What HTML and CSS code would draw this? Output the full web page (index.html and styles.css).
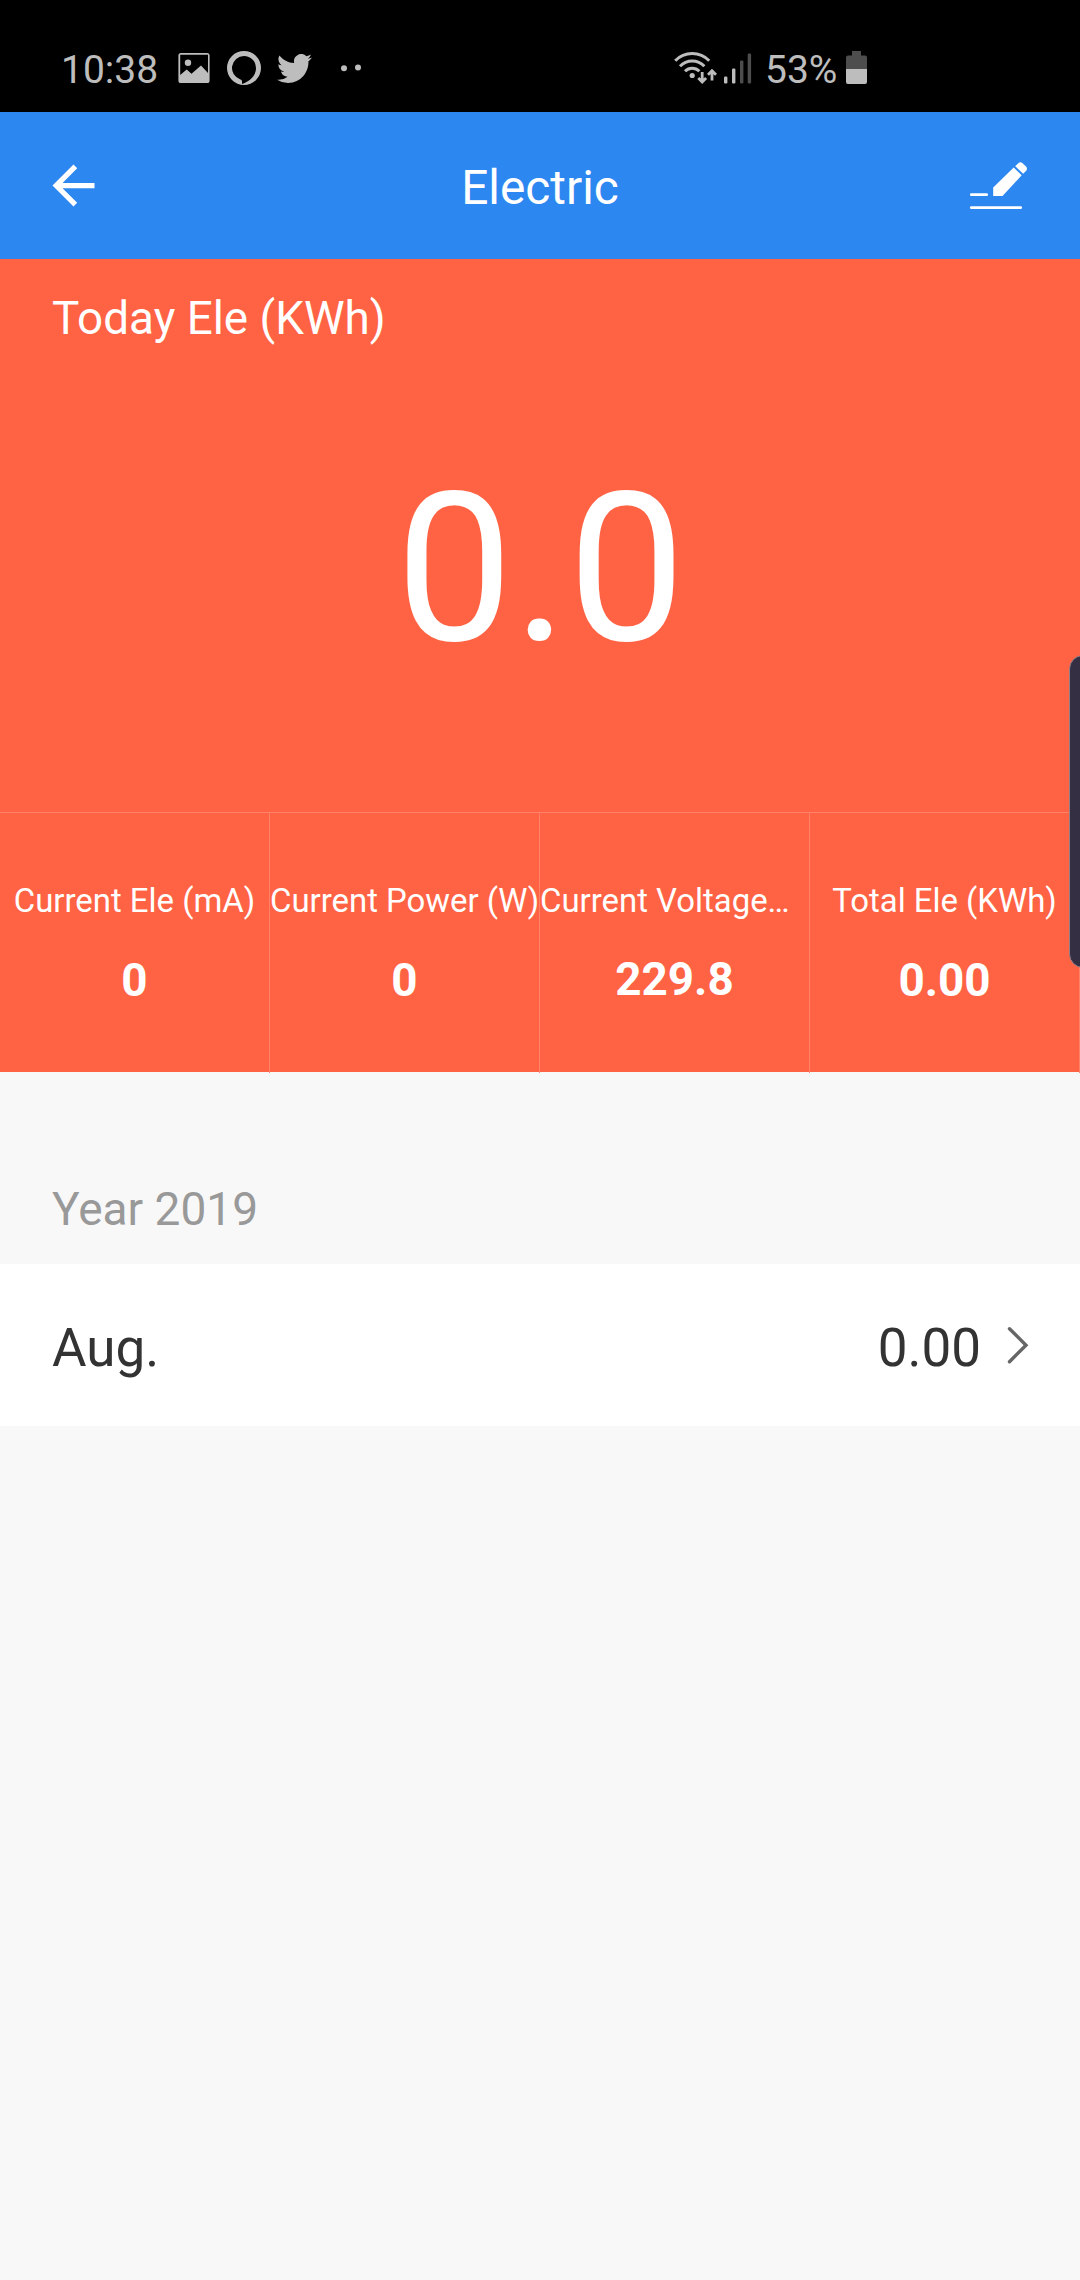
FILE: index.html
```html
<!DOCTYPE html>
<html lang="en">
<head>
  <meta charset="UTF-8" />
  <meta name="viewport" content="width=device-width, initial-scale=1.0"/>
  <title>Electric</title>
  <link rel="stylesheet" href="styles.css">
</head>
<body>
  <div class="status-bar">
    <span class="clock">10:38</span>
    <svg class="icon-image" width="32" height="30" viewBox="0 0 32 30">
      <path fill="currentColor" fill-rule="evenodd" d="M3 0h26a2.600 2.600 0 0 1 2.600 2.600v24.800a2.600 2.600 0 0 1-2.600 2.600H3A2.600 2.600 0 0 1 .4 27.400V2.600A2.600 2.600 0 0 1 3 0zM2.200 1.800V22l6.500-5.500 4.800 4.300L23 12.500l7 7.500V1.800z"/>
      <circle cx="10" cy="9.800" r="3.200" fill="currentColor"/>
    </svg>
    <svg class="icon-alexa" width="34" height="34" viewBox="0 0 34 34">
      <path fill="currentColor" fill-rule="evenodd" d="M17 0a17 17 0 1 1 0 34a17 17 0 0 1 0-34zM17 5a12 12 0 0 0-3.600 23.450c1 .3 1.600.9 1.600 1.900v2.650C22.500 30.500 29 25 29 17A12 12 0 0 0 17 5z"/>
    </svg>
    <svg class="icon-twitter" width="35" height="29" viewBox="0 2.200 24 19.600" preserveAspectRatio="none">
      <path fill="currentColor" d="M23.950 4.570a10 10 0 0 1-2.820.77 4.960 4.960 0 0 0 2.160-2.720c-.95.55-2 .95-3.130 1.180a4.920 4.920 0 0 0-8.380 4.480C7.690 8.100 4.070 6.130 1.640 3.160a4.820 4.820 0 0 0-.67 2.480c0 1.710.87 3.210 2.190 4.100a4.900 4.900 0 0 1-2.230-.62v.06a4.920 4.920 0 0 0 3.950 4.830 5 5 0 0 1-2.210.08 4.940 4.940 0 0 0 4.600 3.420A9.870 9.870 0 0 1 0 19.540a13.990 13.990 0 0 0 7.560 2.210c9.050 0 14-7.500 14-13.980 0-.21 0-.42-.02-.63a9.940 9.940 0 0 0 2.410-2.570z"/>
    </svg>
    <svg class="icon-more" width="22" height="10" viewBox="0 0 22 10">
      <circle cx="4" cy="5.300" r="3" fill="currentColor"/>
      <circle cx="18" cy="4.500" r="3" fill="currentColor"/>
    </svg>
    <svg class="icon-wifi" width="43" height="34" viewBox="0 0 43 34">
      <g fill="none" stroke="currentColor" stroke-width="3">
        <path d="M1.200 9.800a23.500 23.500 0 0 1 34 0"/>
        <path d="M6 15.200a17 17 0 0 1 24.400 0"/>
        <path d="M11 20.300a10.300 10.300 0 0 1 14.400 0"/>
      </g>
      <circle cx="18.200" cy="24.500" r="2.600" fill="currentColor"/>
      <path fill="none" stroke="currentColor" stroke-width="2.800" d="M28.200 21v10M24.300 27l3.900 4 3.900-4M38 29.500V20M34 23.800l4-4 4 4"/>
    </svg>
    <svg class="icon-signal" width="28" height="31" viewBox="0 0 28 31">
      <rect x="0" y="23.500" width="3.400" height="7" rx="1.200" fill="currentColor"/>
      <rect x="8" y="15.500" width="3.400" height="15" rx="1.200" fill="currentColor"/>
      <rect x="16" y="7.500" width="3.400" height="23" rx="1.200" fill="#4d4d4d"/>
      <rect x="23.700" y=".5" width="3.400" height="30" rx="1.200" fill="#4d4d4d"/>
    </svg>
    <span class="battery-text">53%</span>
    <svg class="icon-battery" width="21" height="33" viewBox="0 0 21 33">
      <path fill="#4d4d4d" d="M6 0h9v4.500h4a2 2 0 0 1 2 2V19H0V6.500a2 2 0 0 1 2-2h4z"/>
      <path fill="currentColor" d="M0 18h21v13a2 2 0 0 1-2 2H2a2 2 0 0 1-2-2z"/>
    </svg>
  </div>

  <header class="app-bar">
    <svg class="icon-back" width="63" height="63" viewBox="0 0 24 24">
      <path fill="currentColor" d="M20 11H7.830l5.590-5.590L12 4l-8 8 8 8 1.410-1.410L7.830 13H20v-2z"/>
    </svg>
    <h1>Electric</h1>
    <svg class="icon-edit" width="58" height="48" viewBox="0 0 58 48">
      <rect x="0" y="44.200" width="52" height="2.800" rx="1.200" fill="currentColor"/>
      <rect x="0" y="31.200" width="18" height="2.800" rx="1.200" fill="currentColor"/>
      <path fill="currentColor" d="M23.200 34v-8.500L43.700 5.600l8 7.600L32.500 34z"/>
      <path fill="currentColor" d="M45.200 4.200l3.300-3.200c1.200-1.100 2.600-1.100 3.800 0l3.700 3.600c1.200 1.200 1.200 3 .2 4.200l-3 3z"/>
    </svg>
  </header>

  <section class="today">
    <h2>Today Ele (KWh)</h2>
    <div class="today-value">0.0</div>
    <div class="stats">
      <div class="stat">
        <div class="stat-label">Current Ele (mA)</div>
        <div class="stat-value">0</div>
      </div>
      <div class="stat">
        <div class="stat-label">Current Power (W)</div>
        <div class="stat-value">0</div>
      </div>
      <div class="stat">
        <div class="stat-label clipped">Current Voltage…</div>
        <div class="stat-value">229.8</div>
      </div>
      <div class="stat">
        <div class="stat-label">Total Ele (KWh)</div>
        <div class="stat-value">0.00</div>
      </div>
    </div>
  </section>

  <section class="history">
    <h3>Year 2019</h3>
    <div class="month">
      <span class="month-name">Aug.</span>
      <span class="month-value">0.00</span>
      <svg class="icon-chevron" width="22" height="38" viewBox="0 0 22 38">
        <path fill="none" stroke="currentColor" stroke-width="3.400" stroke-linecap="round" d="M2.500 2.700L19 19.200 2.500 35.700"/>
      </svg>
    </div>
  </section>

  <div class="edge-panel"></div>
</body>
</html>
```

FILE: styles.css
```css
* { box-sizing: border-box; }
body {
  position: relative;
  margin: 0;
  width: 1080px;
  height: 2280px;
  overflow: hidden;
  background: #f8f8f8;
  color: #333;
  font-family: Roboto, sans-serif;
}
h1, h2, h3 { margin: 0; font-weight: 400; }
svg { display: block; flex: none; }

.status-bar {
  display: flex;
  align-items: flex-start;
  height: 112px;
  padding: 50px 0 0 61px;
  background: #000;
  color: #bdbdbd;
  font-size: 39px;
  line-height: 40px;
}
.clock { width: 117px; }
.icon-image { margin-top: 3px; }
.icon-alexa { margin: 1px 0 0 17px; }
.icon-twitter { margin: 4px 0 0 16px; }
.icon-more { margin: 13px 0 0 28px; }
.icon-wifi { margin: 1px 0 0 312px; }
.icon-signal { margin: 3px 0 0 7px; }
.battery-text { width: 81px; margin-left: 13px; }
.icon-battery { margin: 1px 0 0 0; }

.app-bar {
  display: flex;
  align-items: center;
  justify-content: space-between;
  height: 147px;
  padding: 0 52px 0 42px;
  background: #2d87f0;
  color: #fff;
}
.app-bar h1 { padding: 4px 0 0 5px; font-size: 47.800px; line-height: 56px; }

.today {
  height: 813px;
  background: #ff6344;
  color: #fff;
}
.today h2 { padding: 30px 52px 0; font-size: 45.800px; line-height: 60px; }
.today-value {
  height: 463px;
  padding: 100px 0 0 1px;
  font-size: 208.600px;
  line-height: 240px;
  text-align: center;
}
.stats {
  display: grid;
  grid-template-columns: repeat(4, 270px);
  height: 261px;
  border-top: 1px solid #ff8268;
}
.stat {
  padding-top: 68px;
  border-right: 1px solid #ff8268;
  text-align: center;
  white-space: nowrap;
}
.stat-label { font-size: 32.900px; line-height: 40px; }
.stat-label.clipped { text-align: left; }
.stat-value { margin-top: 33px; font-size: 45.800px; font-weight: 700; line-height: 54px; }
.clipped + .stat-value { margin-top: 32px; }

.history h3 {
  height: 192px;
  padding: 107px 52px 0;
  color: #999;
  font-size: 46px;
  line-height: 60px;
}
.month {
  display: flex;
  align-items: center;
  height: 162px;
  padding: 0 51px 0 52px;
  background: #fff;
  font-size: 53px;
  line-height: 60px;
}
.month-name { flex: 1; padding-top: 5px; }
.month-value { padding-top: 5px; }
.icon-chevron { margin-left: 26px; color: #666; }

/* edge handle, runs off the right side of the screen */
.edge-panel {
  position: absolute;
  top: 655px;
  right: -20px;
  width: 31px;
  height: 313px;
  border: 1px solid #94828a;
  border-radius: 14px;
  background: #352f44;
}
```
